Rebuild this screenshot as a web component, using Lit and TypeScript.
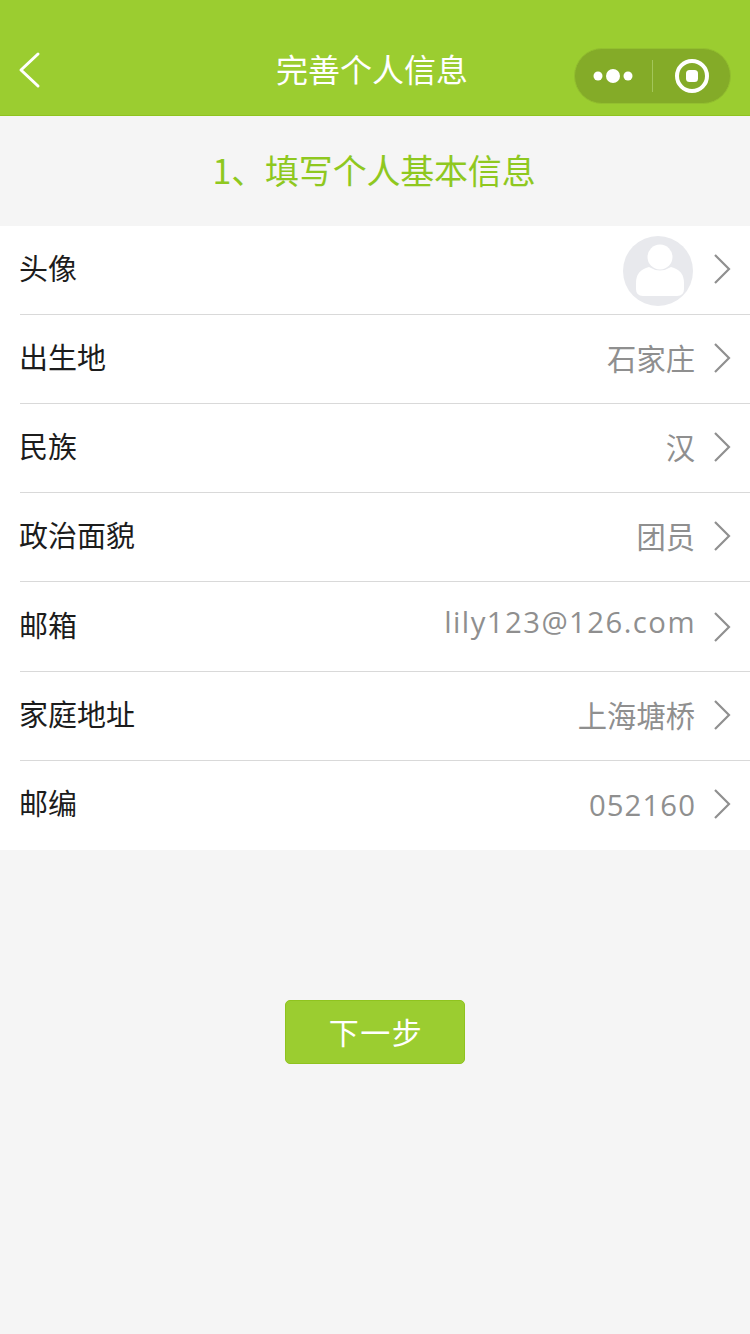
import { LitElement, html, css, svg } from "lit";
import { customElement } from "lit/decorators.js";

const rows: { label: string; value?: string; kind?: string; height: number }[] = [
  { label: "头像", height: 88 },
  { label: "出生地", value: "石家庄", height: 89 },
  { label: "民族", value: "汉", height: 89 },
  { label: "政治面貌", value: "团员", height: 89 },
  { label: "邮箱", value: "lily123@126.com", kind: "latin email", height: 90 },
  { label: "家庭地址", value: "上海塘桥", height: 89 },
  { label: "邮编", value: "052160", kind: "latin zip", height: 90 },
];

@customElement("app-root")
export class AppRoot extends LitElement {
  static styles = css`
    :host {
      display: block;
      width: 750px;
      height: 1334px;
      background: #f5f5f5;
      font-family: "Noto Sans CJK SC", "Noto Sans", sans-serif;
      overflow: hidden;
    }
    .nav {
      background: #9bcd30;
      border-bottom: 1px solid #8fc31f;
      display: flex;
      align-items: flex-start;
      padding-top: 48px;
      height: 67px;
      position: relative;
    }
    .back {
      width: 24px;
      height: 38px;
      margin: 3px 0 0 18px;
      flex: none;
    }
    .nav-title {
      position: absolute;
      left: 0;
      right: 6px;
      top: 46px;
      text-align: center;
      color: #fff;
      font-size: 32px;
      line-height: 44px;
    }
    .capsule {
      position: absolute;
      left: 574px;
      top: 48px;
      width: 157px;
      height: 56px;
      border-radius: 28px;
      background: #84ab28;
      box-sizing: border-box;
      border: 1px solid #93c02f;
    }
    .capsule svg {
      display: block;
    }
    .subtitle {
      height: 110px;
      padding: 0 2px 4px 0;
      box-sizing: border-box;
      display: flex;
      align-items: center;
      justify-content: center;
      color: #8fc81f;
      font-size: 34px;
      letter-spacing: -0.2px;
    }
    .list {
      background: #fff;
    }
    .row {
      display: flex;
      align-items: center;
      padding-left: 19px;
      position: relative;
      box-sizing: border-box;
    }
    .row + .row::before {
      content: "";
      position: absolute;
      left: 20px;
      right: 0;
      top: 0;
      height: 1px;
      background: #d9d9d9;
    }
    .label {
      font-size: 29px;
      color: #1c1c1c;
      flex: 1;
      line-height: 40px;
      margin-top: -6px;
    }
    .label.email {
      margin-top: -4px;
    }
    .value {
      font-size: 29.3px;
      color: #8f8f8f;
      line-height: 40px;
      margin-top: -4px;
    }
    .value.latin {
      font-family: "Open Sans", "Noto Sans", sans-serif;
      letter-spacing: 1.45px;
      margin-right: -1px;
    }
    .value.email {
      margin-top: -9px;
    }
    .value.zip {
      margin-top: -1px;
      letter-spacing: 1.1px;
    }
    .chevron {
      width: 20px;
      height: 32px;
      margin: -2px 18px 0 17px;
      flex: none;
    }
    .chevron.low {
      margin-top: 1px;
    }
    .avatar {
      width: 70px;
      height: 70px;
      flex: none;
      margin: 1px 2px 0 0;
    }
    .footer {
      padding-top: 150px;
      display: flex;
      justify-content: center;
    }
    .next {
      width: 180px;
      height: 64px;
      box-sizing: border-box;
      border: 1px solid #8fc31f;
      border-radius: 5px;
      background: #9bcd30;
      color: #fff;
      font-size: 30px;
      font-family: inherit;
      padding: 0 0 2px 2px;
      letter-spacing: 1.5px;
    }
  `;

  render() {
    const chevron = svg`<polyline points="3,2 17,16 3,30" fill="none" stroke="#909090" stroke-width="2.2" />`;
    return html`
      <div class="nav">
        <svg class="back" viewBox="0 0 24 38">
          <polyline points="20,3 3,19 20,35" fill="none" stroke="#fff" stroke-width="3" stroke-linecap="round" stroke-linejoin="round" />
        </svg>
        <div class="nav-title">完善个人信息</div>
        <div class="capsule">
          <svg width="155" height="54" viewBox="0 0 155 54">
            <circle cx="23" cy="27" r="4.5" fill="#fff" />
            <circle cx="38" cy="27" r="7" fill="#fff" />
            <circle cx="53" cy="27" r="4.5" fill="#fff" />
            <rect x="77" y="11" width="1" height="32" fill="#a3c65a" />
            <circle cx="117" cy="27" r="15" fill="none" stroke="#fff" stroke-width="4" />
            <rect x="111" y="21" width="12" height="12" rx="3.5" fill="#fff" />
          </svg>
        </div>
      </div>
      <div class="subtitle">1、填写个人基本信息</div>
      <div class="list">
        ${rows.map(
          (r, i) => html`
            <div class="row" style="height:${r.height}px">
              <div class="label ${r.kind?.includes("email") ? "email" : ""}">${r.label}</div>
              ${i === 0
                ? html`<svg class="avatar" viewBox="0 0 70 70">
                    <circle cx="35" cy="35" r="35" fill="#e8e9ed" />
                    <circle cx="37" cy="21" r="12.5" fill="#fff" />
                    <path d="M26 31 Q13 34 13 47 L13 53 Q13 60 20 60 L54 60 Q61 60 61 53 L61 47 Q61 34 48 31 Q37 38 26 31 Z" fill="#fff" />
                  </svg>`
                : html`<div class="value ${r.kind ?? ""}">${r.value}</div>`}
              <svg class="chevron ${r.kind?.includes("email") ? "low" : ""}" viewBox="0 0 20 32">${chevron}</svg>
            </div>
          `
        )}
      </div>
      <div class="footer"><button class="next">下一步</button></div>
    `;
  }
}
